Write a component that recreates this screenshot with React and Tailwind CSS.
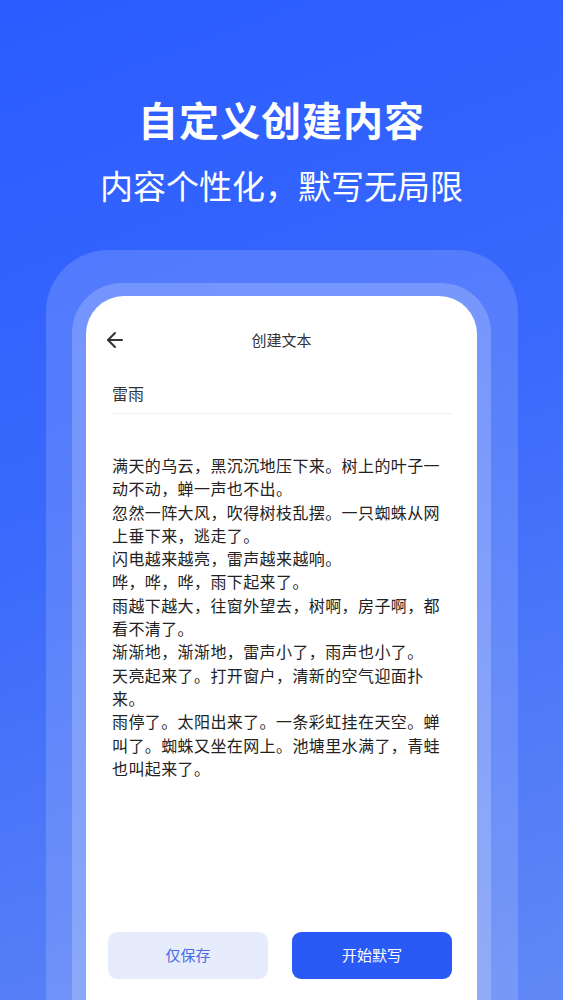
import React from "react";
import { ArrowLeft } from "lucide-react";

const lines = [
  "满天的乌云，黑沉沉地压下来。树上的叶子一",
  "动不动，蝉一声也不出。",
  "忽然一阵大风，吹得树枝乱摆。一只蜘蛛从网",
  "上垂下来，逃走了。",
  "闪电越来越亮，雷声越来越响。",
  "哗，哗，哗，雨下起来了。",
  "雨越下越大，往窗外望去，树啊，房子啊，都",
  "看不清了。",
  "渐渐地，渐渐地，雷声小了，雨声也小了。",
  "天亮起来了。打开窗户，清新的空气迎面扑",
  "来。",
  "雨停了。太阳出来了。一条彩虹挂在天空。蝉",
  "叫了。蜘蛛又坐在网上。池塘里水满了，青蛙",
  "也叫起来了。",
];

const font = { fontFamily: '"Noto Sans CJK SC", "Noto Sans", sans-serif' };

export default function App() {
  return (
    <div
      className="flex h-[1000px] w-full flex-col overflow-hidden bg-[linear-gradient(160deg,#2a5bff_0%,#3a69fc_45%,#6188f5_100%)]"
      style={font}
    >
      {/* Headline */}
      <div className="flex flex-col items-center pt-[95px] text-white">
        <h1 className="text-[40px] font-bold leading-[48px] tracking-[1px]">自定义创建内容</h1>
        <p className="mt-[22px] text-[33px] leading-[40px]">内容个性化，默写无局限</p>
      </div>

      {/* Phone frame */}
      <div className="ml-[46px] mr-[45px] mt-[45px] flex flex-1 flex-col rounded-t-[62px] bg-white/15 pl-[26px] pr-[27px] pt-[33px]">
        <div className="flex flex-1 flex-col rounded-t-[50px] bg-white/20 px-[14px] pt-[13px]">
          <div className="flex flex-1 flex-col rounded-t-[38px] bg-white pb-[21px]">
            {/* Top bar */}
            <div className="relative mt-[22px] flex h-[44px] items-center justify-center">
              <ArrowLeft className="absolute left-[17px] h-[24px] w-[24px] text-[#333]" strokeWidth={2} />
              <span className="text-[15px] text-[#333]">创建文本</span>
            </div>

            {/* Title field */}
            <div className="ml-[26px] mr-[25px] flex h-[52px] items-center border-b border-[#f0f0f0] pt-[10px]">
              <span className="text-[16px] text-[#333]">雷雨</span>
            </div>

            {/* Body */}
            <div className="ml-[26px] mr-[25px] mt-[40px] flex-1 text-[16px] leading-[23.3px] tracking-[0.4px] text-[#222]">
              {lines.map((l, i) => (
                <div key={i} className="whitespace-nowrap">{l}</div>
              ))}
            </div>

            {/* Actions */}
            <div className="ml-[22px] mr-[25px] flex gap-[24px]">
              <button className="flex h-[47px] flex-1 items-center justify-center rounded-[9px] bg-[#e7ecfc] text-[15px] text-[#4a6de4]">
                仅保存
              </button>
              <button className="flex h-[47px] flex-1 items-center justify-center rounded-[9px] bg-[#2a5af6] text-[15px] text-white">
                开始默写
              </button>
            </div>
          </div>
        </div>
      </div>
    </div>
  );
}
